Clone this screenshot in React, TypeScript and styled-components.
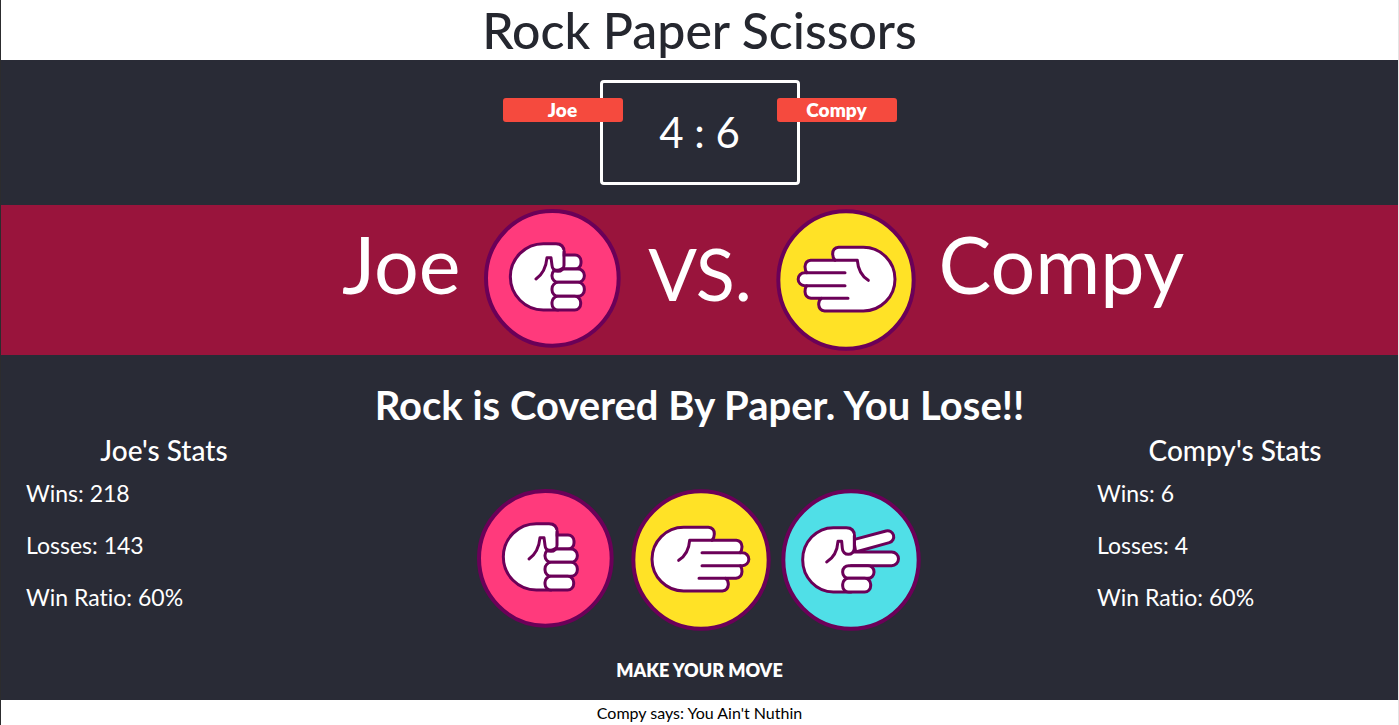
import React, { useState } from 'react';
import styled, { createGlobalStyle } from 'styled-components';

type Move = 'rock' | 'paper' | 'scissors';

const colors = {
  ink: '#292b36',
  wine: '#99143c',
  badge: '#f54a3e',
  outline: '#6b0058',
  pink: '#ff3a7c',
  yellow: '#ffe226',
  cyan: '#50dfe7',
  white: '#ffffff',
};

const GlobalStyle = createGlobalStyle`
  * { box-sizing: border-box; margin: 0; padding: 0; }
  body {
    font-family: Lato, "Liberation Sans", sans-serif;
    font-variant-ligatures: none;
    background: ${colors.white};
  }
`;

const Page = styled.div`
  display: flex;
  flex-direction: column;
  min-height: 100vh;
  border-left: 1px solid #2c2c2e;
  border-right: 1px solid #e6e6e6;
`;

const Header = styled.header`
  height: 60px;
  text-align: center;
`;

const Title = styled.h1`
  color: #25272f;
  font-size: 50px;
  font-weight: 500;
  line-height: 60px;
`;

const ScoreSection = styled.section`
  display: flex;
  justify-content: center;
  padding: 20px 0;
  background: ${colors.ink};
`;

const ScoreBoard = styled.div`
  position: relative;
  width: 200px;
  border: 3px solid ${colors.white};
  border-radius: 4px;
  color: ${colors.white};
  font-size: 42px;
  line-height: 99px;
  text-align: center;
`;

const Badge = styled.span<{ $side: 'left' | 'right' }>`
  position: absolute;
  top: 15px;
  ${({ $side }) => $side}: -100px;
  width: 120px;
  border-radius: 3px;
  background: ${colors.badge};
  font-size: 19px;
  font-weight: 800;
  line-height: 24px;
`;

const VersusBand = styled.section`
  display: grid;
  grid-template-columns: 1fr auto 1fr;
  column-gap: 23px;
  min-height: 150px;
  background: ${colors.wine};
  color: ${colors.white};
`;

const PlayerName = styled.p<{ $align: 'left' | 'right' }>`
  font-size: 79px;
  line-height: 118px;
  text-align: ${({ $align }) => $align};
`;

const Duel = styled.div`
  display: flex;
  align-items: flex-start;
  padding-top: 4px;
`;

const Versus = styled.span`
  width: 155px;
  padding-left: 4px;
  font-size: 72px;
  line-height: 128px;
  text-align: center;
`;

const Arena = styled.main`
  padding: 26px 0 17px;
  background: ${colors.ink};
  color: ${colors.white};
`;

const Result = styled.h2`
  font-size: 40px;
  font-weight: 700;
  line-height: 48px;
  text-align: center;
`;

const Columns = styled.div`
  display: grid;
  grid-template-columns: 7fr 16fr 7fr;
  padding-top: 4px;
`;

const StatsTitle = styled.h3`
  font-size: 28px;
  font-weight: 500;
  line-height: 34px;
  text-align: center;
`;

const StatsList = styled.ul`
  padding-left: 25px;
  list-style: none;
  font-size: 23px;
  line-height: 52px;
`;

const Moves = styled.div`
  display: flex;
  flex-direction: column;
  align-items: center;
  padding-top: 56px;
`;

const MoveRow = styled.div`
  display: flex;
  align-items: flex-start;
  column-gap: 10px;
`;

const MoveButton = styled.button`
  display: block;
  border: 0;
  background: none;
  cursor: pointer;

  &:first-child {
    padding-right: 7px;
  }
`;

const Prompt = styled.p`
  padding-top: 26px;
  font-size: 18px;
  font-weight: 800;
  line-height: 26px;
`;

const Footer = styled.footer`
  color: #000;
  font-size: 16px;
  line-height: 25px;
  text-align: center;
`;

const Sign = styled.svg<{ $mirrored?: boolean }>`
  display: block;
  flex: none;
  transform: ${({ $mirrored }) => ($mirrored ? 'scaleX(-1)' : 'none')};
`;

const strokeProps = {
  fill: colors.white,
  stroke: colors.outline,
  strokeWidth: 9,
  strokeLinejoin: 'round' as const,
  strokeLinecap: 'round' as const,
};

function Rock() {
  return (
    <Sign width="137" height="139" viewBox="22 27 411 417" aria-label="Rock" role="img">
      <ellipse cx="227" cy="235" rx="199" ry="202" fill={colors.pink} stroke={colors.outline} strokeWidth="12" />
      <g {...strokeProps}>
        <path d="M245 330H200a99 99.500 0 0 1 0-199H238q24 0 24 24V260Z" />
        <rect x="226" y="165" width="87" height="42" rx="18" />
        <rect x="226" y="207" width="97" height="40" rx="19" />
        <rect x="226" y="247" width="97" height="42" rx="19" />
        <rect x="226" y="289" width="86" height="41" rx="18" />
        <path d="M214 150H258V194a18 18 0 0 1-34 0L222 204H214Z" stroke="none" />
        <path d="M178 237Q207 217 211 173H223L226 196a18 18 0 0 0 36 0V155" fill="none" />
      </g>
    </Sign>
  );
}

function Paper({ mirrored = false }: { mirrored?: boolean }) {
  return (
    <Sign $mirrored={mirrored} width="140" height="142" viewBox="17 26 420 426" aria-label="Paper" role="img">
      <ellipse cx="227" cy="239" rx="203" ry="206" fill={colors.yellow} stroke={colors.outline} strokeWidth="12" />
      <g {...strokeProps}>
        <path d="M175 332a95 95.500 0 0 1 0-191H249q18 2 18 20q0 11-7 19H333q16 2 17 19q0 11-6 18H351a19 19 0 0 1 0 39H345q5 7 5 18q-1 18-18 20H301q8 6 8 18q-1 18-18 20Z" />
        <path d="M160 240Q190 221 193 180H260M230 217H344M230 256H345M221 294H301" fill="none" />
      </g>
    </Sign>
  );
}

function Scissors() {
  return (
    <Sign width="140" height="142" viewBox="18 26 420 426" aria-label="Scissors" role="img">
      <ellipse cx="228" cy="239" rx="203" ry="206" fill={colors.cyan} stroke={colors.outline} strokeWidth="12" />
      <g {...strokeProps}>
        <path d="M236 178L333 152a18 18 0 0 1 10 35L242 215Z" />
        <path d="M228 335H175a92 96.500 0 0 1 0-193H214q24 0 24 24V215H350a20 20 0 0 1 0 41H228Z" />
        <rect x="203" y="256" width="94" height="38" rx="18" />
        <rect x="203" y="294" width="84" height="41" rx="18" />
        <path d="M192 160H234V206a17 17 0 0 1-32 0L198 215H192Z" stroke="none" />
        <path d="M155 245Q186 226 189 183H200L202 204a18 18 0 0 0 36 0V166" fill="none" />
      </g>
    </Sign>
  );
}

const moves: { id: Move; Icon: () => React.JSX.Element }[] = [
  { id: 'rock', Icon: Rock },
  { id: 'paper', Icon: () => <Paper /> },
  { id: 'scissors', Icon: Scissors },
];

function Stats({ name, wins, losses, ratio }: { name: string; wins: number; losses: number; ratio: string }) {
  return (
    <section>
      <StatsTitle>{name}'s Stats</StatsTitle>
      <StatsList>
        <li>Wins: {wins}</li>
        <li>Losses: {losses}</li>
        <li>Win Ratio: {ratio}</li>
      </StatsList>
    </section>
  );
}

export default function App() {
  const [move, setMove] = useState<Move>('rock');

  return (
    <Page>
      <GlobalStyle />
      <Header>
        <Title>Rock Paper Scissors</Title>
      </Header>
      <ScoreSection>
        <ScoreBoard>
          <Badge $side="left">Joe</Badge>4 : 6<Badge $side="right">Compy</Badge>
        </ScoreBoard>
      </ScoreSection>
      <VersusBand>
        <PlayerName $align="right">Joe</PlayerName>
        <Duel>
          {move === 'rock' && <Rock />}
          {move === 'paper' && <Paper />}
          {move === 'scissors' && <Scissors />}
          <Versus>VS.</Versus>
          <Paper mirrored />
        </Duel>
        <PlayerName $align="left">Compy</PlayerName>
      </VersusBand>
      <Arena>
        <Result>Rock is Covered By Paper. You Lose!!</Result>
        <Columns>
          <Stats name="Joe" wins={218} losses={143} ratio="60%" />
          <Moves>
            <MoveRow>
              {moves.map(({ id, Icon }) => (
                <MoveButton key={id} type="button" aria-label={id} onClick={() => setMove(id)}>
                  <Icon />
                </MoveButton>
              ))}
            </MoveRow>
            <Prompt>MAKE YOUR MOVE</Prompt>
          </Moves>
          <Stats name="Compy" wins={6} losses={4} ratio="60%" />
        </Columns>
      </Arena>
      <Footer>Compy says: You Ain't Nuthin</Footer>
    </Page>
  );
}
